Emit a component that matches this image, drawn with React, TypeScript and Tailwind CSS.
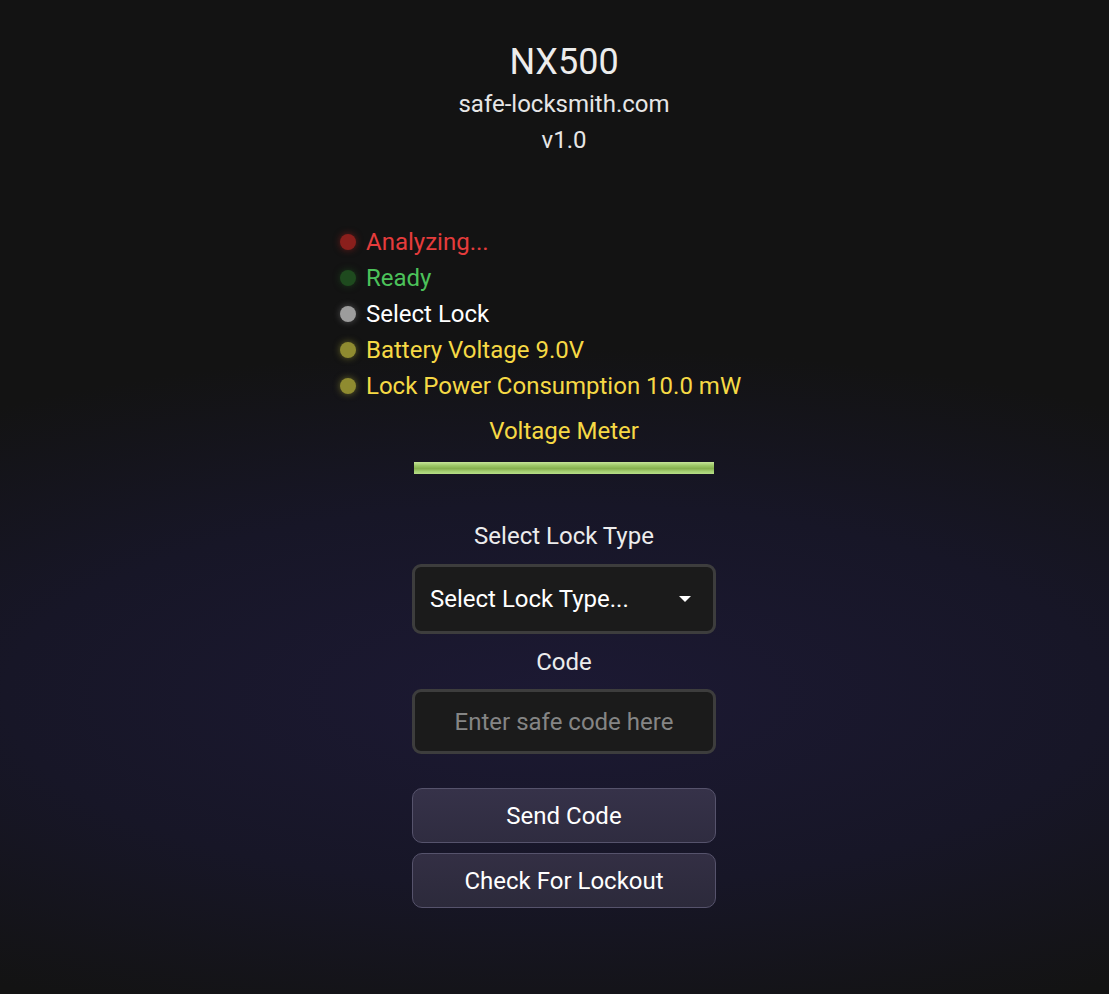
const statuses = [
  { label: "Analyzing...", text: "text-[#e53c3c]", dot: "bg-[#8a1f1c] shadow-[0_0_7px_rgba(138,31,28,0.7)]" },
  { label: "Ready", text: "text-[#4cc25a]", dot: "bg-[#1e4a1e] shadow-[0_0_7px_rgba(30,74,30,0.7)]" },
  { label: "Select Lock", text: "text-white", dot: "bg-[#9c9c9c] shadow-[0_0_7px_rgba(200,200,200,0.35)]" },
  { label: "Battery Voltage 9.0V", text: "text-[#f6d945]", dot: "bg-[#8f8b30] shadow-[0_0_7px_rgba(143,139,48,0.7)]" },
  { label: "Lock Power Consumption 10.0 mW", text: "text-[#f6d945]", dot: "bg-[#8f8b30] shadow-[0_0_7px_rgba(143,139,48,0.7)]" },
];

const App = () => {
  return (
    <div className="min-h-screen w-full bg-[#121212] bg-[radial-gradient(ellipse_90%_35%_at_50%_70%,#1c1933_0%,#171627_55%,#131313_100%)] font-['Roboto',sans-serif] text-[#e6e6e6]">
      <div className="flex flex-col items-center pl-[19px] pt-[42px] pb-[86px]">
        {/* Header */}
        <h1 className="text-[36px] leading-[40px] font-normal text-[#ececec]">NX500</h1>
        <p className="mt-1 text-[24px] leading-[36px]">safe-locksmith.com</p>
        <p className="text-[24px] leading-[36px]">v1.0</p>

        {/* Status list */}
        <div className="mt-[66px] w-[448px] flex flex-col">
          {statuses.map((s) => (
            <div key={s.label} className="flex items-center h-[36px]">
              <span className={`w-4 h-4 rounded-full shrink-0 ${s.dot}`} />
              <span className={`ml-[10px] text-[24px] leading-[36px] whitespace-nowrap ${s.text}`}>{s.label}</span>
            </div>
          ))}
        </div>

        {/* Voltage meter */}
        <p className="mt-[13px] text-[24px] leading-[28px] text-[#f6d945]">Voltage Meter</p>
        <div className="mt-[17px] w-[300px] h-[12px] bg-[linear-gradient(to_bottom,#c7e59a_0%,#9cc766_30%,#86b04f_55%,#a6d174_80%,#b6dc86_100%)]" />

        {/* Lock type */}
        <label className="mt-[48px] text-[24px] leading-[28px] text-[#ececec]">Select Lock Type</label>
        <div className="mt-[14px] w-[304px] h-[70px] rounded-[9px] border-[3px] border-[#3d3d3d] bg-[#1b1b1b] flex items-center justify-between pl-[15px] pr-[22px]">
          <span className="text-[24px] text-white">Select Lock Type...</span>
          <svg width="12" height="7" viewBox="0 0 12 7">
            <path d="M0 0 L12 0 L6 6 Z" fill="#ffffff" />
          </svg>
        </div>

        {/* Code */}
        <label className="mt-[14px] text-[24px] leading-[28px] text-[#ececec]">Code</label>
        <div className="mt-[13px] w-[304px] h-[65px] rounded-[9px] border-[3px] border-[#3d3d3d] bg-[#1b1b1b] flex items-center justify-center">
          <span className="text-[24px] text-[#858585]">Enter safe code here</span>
        </div>

        {/* Buttons */}
        <button className="mt-[34px] w-[304px] h-[55px] rounded-[10px] border border-[#56536c] bg-[linear-gradient(to_bottom,#363249,#2f2c40)] text-[24px] text-white">
          Send Code
        </button>
        <button className="mt-[10px] w-[304px] h-[55px] rounded-[10px] border border-[#56536c] bg-[linear-gradient(to_bottom,#332f44,#2c2a3b)] text-[24px] text-white">
          Check For Lockout
        </button>
      </div>
    </div>
  );
};

export default App;
